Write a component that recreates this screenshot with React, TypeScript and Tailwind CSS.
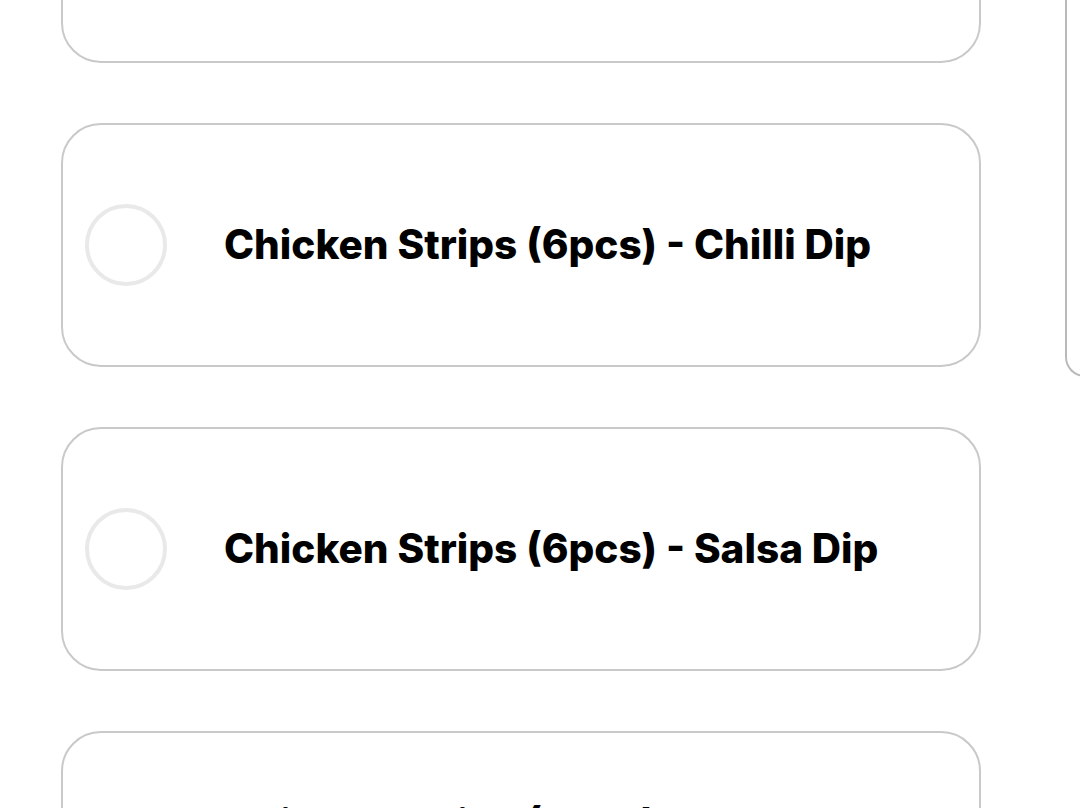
const items = [
  "Chicken Strips (6pcs) - BBQ Dip",
  "Chicken Strips (6pcs) - Chilli Dip",
  "Chicken Strips (6pcs) - Salsa Dip",
  "Chicken Strips (6pcs) - Honey Mustard Dip",
];

function OptionCard({ label }: { label: string }) {
  return (
    <div className="flex h-[244px] w-[920px] shrink-0 items-center rounded-[40px] border-2 border-[#c9c9c9] bg-white pl-[22px] pr-[60px]">
      <div className="h-[82px] w-[82px] shrink-0 rounded-full border-4 border-[#e9e9e9] bg-white" />
      <div
        className="ml-[57px] flex-1 text-[40.5px] font-extrabold leading-[58px] text-black"
        style={{ fontFamily: "Inter, 'Noto Sans', sans-serif" }}
      >
        {label}
      </div>
    </div>
  );
}

export default function App() {
  return (
    <div className="h-[808px] w-[1080px] overflow-hidden bg-white">
      <div className="flex items-start">
        <div className="-mt-[181px] flex flex-col gap-[60px] pl-[61px]">
          {items.map((label) => (
            <OptionCard key={label} label={label} />
          ))}
        </div>
        <div className="ml-[84px] h-[377px] w-[300px] shrink-0 rounded-bl-[20px] border-b-2 border-l-2 border-[#b9b9b9] bg-white" />
      </div>
    </div>
  );
}
